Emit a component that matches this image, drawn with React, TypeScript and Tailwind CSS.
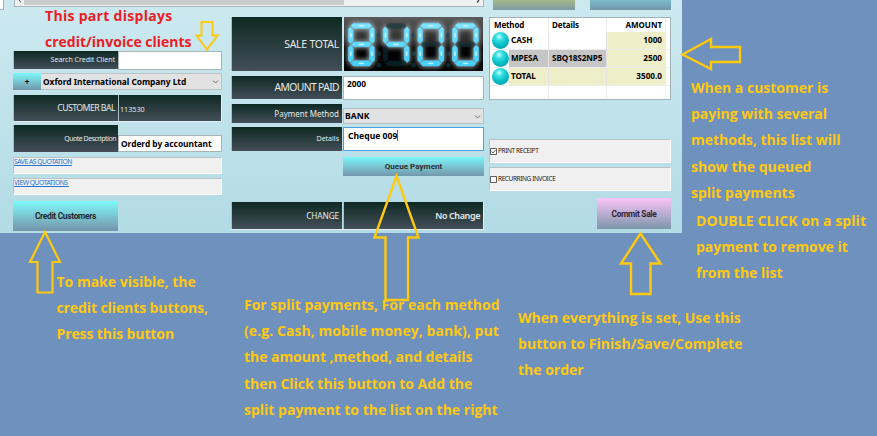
import React from 'react';

const ui = "font-['Noto_Sans','Open_Sans',sans-serif]";
const dark = 'bg-linear-to-b from-[#0d2923] to-[#444f5a] text-[#e4eaea]';

function T({ children, className = '' }: { children: React.ReactNode; className?: string }) {
  return <span className={`whitespace-pre ${className}`}>{children}</span>;
}

function Label({ children, className = '' }: { children: React.ReactNode; className?: string }) {
  return (
    <div className={`flex shrink-0 items-center justify-end border-l border-[#a9bcc0] ${dark} ${className}`}>{children}</div>
  );
}

function Chevron() {
  return (
    <svg className="mr-[2px] ml-auto h-[6px] w-[7px] shrink-0" viewBox="0 0 7 6" fill="none" stroke="#6b6b6b">
      <path d="M1 1.5 3.5 4 6 1.5" />
    </svg>
  );
}

const segments: Record<string, string> = {
  a: '5,0 21,0 23.5,2.5 20.5,5.2 5.5,5.2 2.5,2.5',
  b: '24,3.5 26,6 26,18 23.7,20.3 21.2,17.5 21.2,6.7',
  c: '23.7,22 26,24.3 26,37 24,39.2 21.2,36 21.2,24.8',
  d: '5.5,37.5 20.5,37.5 23.5,40 21,42.7 5,42.7 2.5,40',
  e: '2.3,22 4.8,24.8 4.8,36 2,39.2 0,37 0,24.3',
  f: '2,3.5 4.8,6.7 4.8,17.5 2.3,20.3 0,18 0,6',
  g: '5.5,18.7 20.5,18.7 23,21.2 20.5,23.6 5.5,23.6 3,21.2',
};
const lit: Record<string, string> = { '8': 'abcdefg', '4': 'bcfg', '0': 'abcdef' };
const glints: Record<string, [number, number, number, number]> = {
  a: [13, 2.6, 3, 0.9],
  b: [23.6, 12, 0.9, 2.6],
  c: [23.6, 30.5, 0.9, 2.6],
  d: [13, 40.1, 3, 0.9],
  e: [2.4, 30.5, 0.9, 2.6],
  f: [2.4, 12, 0.9, 2.6],
  g: [13, 21.2, 3, 0.9],
};

function Display() {
  return (
    <svg className="block h-[54px] w-[139px] shrink-0" viewBox="0 0 139 54">
      <defs>
        <linearGradient id="lcd" x1="0" y1="0" x2="0" y2="1">
          <stop offset="0" stopColor="#5a5a5a" />
          <stop offset="0.5" stopColor="#242424" />
          <stop offset="0.58" stopColor="#020202" />
          <stop offset="1" stopColor="#060606" />
        </linearGradient>
        <linearGradient id="seg" gradientUnits="userSpaceOnUse" x1="0" y1="0" x2="0" y2="43">
          <stop offset="0" stopColor="#7fe3ff" />
          <stop offset="1" stopColor="#3fcffa" />
        </linearGradient>
        <filter id="halo" x="-40%" y="-30%" width="180%" height="160%">
          <feGaussianBlur stdDeviation="2" />
        </filter>
      </defs>
      <rect width="139" height="54" fill="url(#lcd)" />
      {'8400'.split('').map((d, i) => (
        <g key={i} transform={`translate(${4.4 + i * 34.7} 6.2)`}>
          <g filter="url(#halo)" opacity="0.72">
            {lit[d].split('').map((s) => (
              <polygon key={s} points={segments[s]} fill="#b4bdc0" stroke="#b4bdc0" strokeWidth="3" />
            ))}
          </g>
          {Object.keys(segments).map((s) => (
            <polygon
              key={s}
              points={segments[s]}
              fill={lit[d].includes(s) ? 'url(#seg)' : '#0c333d'}
              stroke={lit[d].includes(s) ? '#58d6fb' : 'none'}
              strokeWidth="0.5"
              opacity={lit[d].includes(s) ? 1 : 0.55}
            />
          ))}
          {lit[d].split('').map((s) => {
            const [cx, cy, rx, ry] = glints[s];
            return <ellipse key={s} cx={cx} cy={cy} rx={rx} ry={ry} fill="#dcf8ff" opacity="0.8" />;
          })}
          {i < 3 && (
            <g fill="#123a44" opacity="0.7">
              <circle cx="30.4" cy="12" r="2.2" />
              <circle cx="30.4" cy="30.5" r="2.2" />
              <circle cx="30.4" cy="42" r="2.2" />
            </g>
          )}
        </g>
      ))}
    </svg>
  );
}

function Orb() {
  return (
    <span className="ml-[2px] size-[17px] shrink-0 rounded-full bg-[radial-gradient(circle_at_42%_28%,#c8ffff_0%,#3ce0e4_22%,#0cc3c9_50%,#05a3ab_80%,#4fc5ca_100%)]" />
  );
}

function Row({ name, details, amount, nameBg }: { name: string; details: string; amount: string; nameBg: string }) {
  return (
    <div className="flex h-[18px] items-center border-b border-[#ececec]">
      <Orb />
      <div className={`flex h-full w-[40px] items-center border-r border-[#e4e4e4] pl-[2px] ${nameBg}`}><T className="tracking-[-0.1px]">{name}</T></div>
      <div className={`flex h-full w-[58px] items-center border-r border-[#e4e4e4] pl-[3px] ${nameBg}`}><T className="tracking-[-0.1px]">{details}</T></div>
      <div className="flex h-full w-[58px] items-center justify-end bg-[#eeeec8] pr-[3px]"><T>{amount}</T></div>
      <div className="h-full w-px bg-[#ececec]" />
    </div>
  );
}

function Note({ lines, className }: { lines: [string, string][]; className: string }) {
  return (
    <div className={`absolute font-['Open_Sans','Noto_Sans',sans-serif] text-[14px] leading-[26.2px] font-bold ${className}`}>
      {lines.map(([text, tracking]) => (
        <div key={text} className={`w-max whitespace-pre ${tracking}`}>{text}</div>
      ))}
    </div>
  );
}

export default function App() {
  return (
    <div className={`relative h-[436px] w-[877px] overflow-hidden bg-[#6f91be] text-black ${ui}`}>
      <div className="h-[233px] w-[682px] bg-linear-to-b from-[#cde9f0] to-[#b2dbe5]">
        <div className="flex h-[17px] items-start">
          <div className="h-[10px] w-[4px] border-r border-b border-[#9fb3b8] bg-white" />
          <div className="ml-[10px] flex h-[7px] w-[470px] items-start border-r border-b border-l border-[#a6b5b9] bg-[#f0f0f0]">
            <svg className="h-[5px] w-[9px]" viewBox="0 0 9 5" fill="none" stroke="#555"><path d="M4 0 6 2.5" /></svg>
            <div className="h-[5px] w-[320px] bg-[#cdcdcd]" />
            <svg className="mr-[2px] ml-auto h-[5px] w-[6px]" viewBox="0 0 6 5" fill="none" stroke="#444" strokeWidth="1.3"><path d="M4 0 2 2.5" /></svg>
          </div>
          <div className="ml-[9px] h-[10px] w-[82px] bg-linear-to-b from-[#a4b78a] to-[#7f9aa4]" />
          <div className="ml-[15px] h-[10px] w-[81px] bg-linear-to-b from-[#7cbccb] to-[#7297ab]" />
        </div>

        <div className="flex">
          <div className="ml-[13px] w-[209px] pt-[34px]">
            <div className="flex h-[18px]">
              <Label className="w-[105px] pt-px pr-[3px] text-[7px]"><T>Search Credit Client</T></Label>
              <div className="h-[19px] flex-1 border border-[#a7b5b8] bg-white" />
            </div>
            <div className="mt-[4px] flex h-[17px]">
              <div className="flex w-[28px] items-center justify-center bg-linear-to-b from-[#7bf9fa] to-[#6f97ac] text-[8px] font-bold">+</div>
              <div className="flex flex-1 items-center border border-l-0 border-[#bac3c5] bg-[#e2e2e2] pt-px pl-[2px] text-[8.4px] font-bold"><T className="tracking-[-0.03px]">Oxford International Company Ltd</T><Chevron /></div>
            </div>
            <div className="mt-[5px] flex h-[27px] border-r border-b border-[#e1edf0]">
              <Label className="w-[105px] pt-px pr-[3px] text-[8.8px]"><T className="tracking-[-0.6px]">CUSTOMER BAL</T></Label>
              <div className={`flex flex-1 items-center border-l border-[#a9bcc0] pt-[2px] pl-[1px] text-[7.2px] ${dark}`}><T>113530</T></div>
            </div>
            <div className="mt-[3px] flex h-[27px] items-end">
              <Label className="h-[27px] w-[105px] pt-px pr-[2px] text-[7px]"><T className="tracking-[-0.48px]">Quote Description</T></Label>
              <div className="flex h-[17px] flex-1 items-center border border-[#a7b5b8] bg-white pt-px pl-[2px] text-[8.4px] font-bold"><T className="tracking-[-0.03px]">Orderd by accountant</T></div>
            </div>
            <div className="mt-[5px] h-[17px] border border-[#b9c3c6] border-r-white border-b-white bg-[#f0f0f0] text-[6.8px] leading-[8px] tracking-[-0.5px] text-[#2574cf] underline"><T>SAVE AS QUOTATION</T></div>
            <div className="mt-[4px] h-[17px] border border-[#b9c3c6] border-r-white border-b-white bg-[#f0f0f0] text-[6.8px] leading-[8px] tracking-[-0.5px] text-[#2574cf] underline"><T>{'VIEW QUOTATIONS '}</T></div>
            <div className="mt-[6px] flex h-[30px] w-[105px] items-center justify-center bg-linear-to-b from-[#79fafb] to-[#7494aa] font-[Roboto,sans-serif] text-[8.4px] font-bold tracking-[-0.3px] text-[#20282b]"><T>Credit Customers</T></div>
          </div>

          <div className="ml-[9px] w-[253px]">
            <div className="flex h-[54px]">
              <Label className="mr-[2px] w-[111px] pt-px pr-[3px] text-[10.5px]"><T className="tracking-[-0.25px]">SALE TOTAL</T></Label>
              <Display />
            </div>
            <div className="mt-[5px] flex h-[23px]">
              <Label className="w-[111px] pt-px pr-[3px] text-[10.3px]"><T className="tracking-[-0.6px]">AMOUNT PAID</T></Label>
              <div className="ml-px h-[24px] flex-1 border border-[#a7b5b8] bg-white pl-[3px] text-[8.4px] leading-[14px] font-bold"><T>2000</T></div>
            </div>
            <div className="mt-[5px] flex h-[19px]">
              <Label className="w-[111px] pr-[3px] text-[8px]"><T>Payment Method</T></Label>
              <div className="mt-[4px] ml-px flex h-[16px] flex-1 items-center border border-[#b7c0c2] bg-[#e2e2e2] pt-px pl-px text-[8.6px] font-bold"><T>BANK</T><Chevron /></div>
            </div>
            <div className="mt-[4px] flex h-[24px]">
              <Label className="w-[111px] pt-px pr-[3px] text-[7px]"><T>Details</T></Label>
              <div className="ml-px flex flex-1 items-start border border-[#4ba0df] bg-white pt-[2px] pl-[4px] text-[8.6px] leading-[12px] font-bold"><T>Cheque 009</T><span className="h-[11px] w-px bg-[#666]" /></div>
            </div>
            <div className="mt-[6px] ml-[112px] flex h-[19px] items-center justify-center bg-linear-to-b from-[#79f6f8] to-[#7297ad] font-[Roboto,sans-serif] text-[8.1px] font-bold text-[#2b302e]"><T>Queue Payment</T></div>
            <div className="mt-[26px] flex h-[28px] border-r border-b border-[#e1edf0]">
              <Label className="w-[111px] pt-px pr-[3px] text-[8.3px]"><T className="tracking-[-0.15px]">CHANGE</T></Label>
              <div className={`ml-px flex flex-1 items-center justify-end border-l border-[#a9bcc0] pr-[3px] text-[9px] font-semibold ${dark}`}><T className="tracking-[-0.4px]">No Change</T></div>
            </div>
          </div>

          <div className="ml-[5px] w-[182px]">
            <div className="h-[83px] border border-[#9fb3b8] bg-white text-[8.2px] font-bold">
              <div className="flex h-[14px] items-center text-[8px] leading-[14px]">
                <div className="w-[59px] border-r border-[#ececec] pl-[4px]"><T className="tracking-[-0.15px]">Method</T></div>
                <div className="w-[58px] border-r border-[#ececec] pl-[3px]"><T className="tracking-[-0.1px]">Details</T></div>
                <div className="flex w-[58px] justify-end pr-[3px]"><T>AMOUNT</T></div>
                <div className="h-full w-px bg-[#ececec]" />
              </div>
              <Row name="CASH" details="" amount="1000" nameBg="bg-white" />
              <Row name="MPESA" details="SBQ18S2NP5" amount="2500" nameBg="bg-[#c6c6c6]" />
              <Row name="TOTAL" details="" amount="3500.0" nameBg="bg-[#eeeec8]" />
              <div className="flex h-[13px]">
                <div className="w-[59px] border-r border-[#ececec]" />
                <div className="w-[58px] border-r border-[#ececec]" />
                <div className="w-[59px] border-r border-[#ececec]" />
              </div>
            </div>
            <div className="mt-[39px] flex h-[24px] items-center border border-[#b9c3c6] border-r-white border-b-white bg-[#f0f0f0] text-[6.5px] tracking-[-0.4px] text-[#222]">
              <svg className="mr-px size-[7px]" viewBox="0 0 7 7" fill="white" stroke="#333" strokeWidth="0.8"><path d="M.5.5h6v6h-6zM1.7 3.5 3 5 5.500 2" /></svg>
              <T>PRINT RECEIPT</T>
            </div>
            <div className="mt-[4px] flex h-[24px] items-center border border-[#b9c3c6] border-r-white border-b-white bg-[#f0f0f0] text-[6.5px] tracking-[-0.4px] text-[#222]">
              <svg className="mr-px size-[7px]" viewBox="0 0 7 7" fill="white" stroke="#333" strokeWidth="0.8"><path d="M.5.5h6v6h-6z" /></svg>
              <T>RECURRING INVOICE</T>
            </div>
            <div className="mt-[7px] ml-auto flex h-[31px] w-[74px] items-center justify-center bg-linear-to-b from-[#fbc4fb] to-[#7b96aa] pt-px font-[Roboto,sans-serif] text-[8.4px] font-bold tracking-[-0.3px] text-[#331f38]"><T>Commit Sale</T></div>
          </div>
        </div>
      </div>

      <svg className="absolute inset-0 h-[436px] w-[877px]" viewBox="0 0 877 436" fill="none" stroke="#ffc90e" strokeWidth="2.4">
        <path d="M201.500 22h11v13.500h5L207 49.500 196.500 35.500h5z" strokeWidth="2" />
        <path d="M45 232 60 262h-7.500v30.500h-15V262H30z" strokeWidth="2.2" />
        <path d="M396.500 176 418.500 237.500H408v62.500h-22.500v-62.500H374.500z" />
        <path d="M640.500 233.500 660.500 263.500h-10V294h-19.500v-30.500h-10z" />
        <path d="M682.500 54.500 711 39v8h29v15h-29v7z" />
      </svg>

      <Note className="top-[3px] left-[45px] text-[#ed1c24]" lines={[['This part displays', 'tracking-[0.3px]'], ['credit/invoice clients', '']]} />
      <Note className="top-[269px] left-[56.500px] text-[#ffc90e]" lines={[['To make visible, the', ''], ['credit clients buttons,', 'tracking-[-0.1px]'], ['Press this button', 'tracking-[-0.1px]']]} />
      <Note className="top-[292px] left-[244px] text-[#ffc90e]" lines={[['For split payments, For each method', ''], ['(e.g. Cash, mobile money, bank), put', 'tracking-[0.06px]'], ['the amount ,method, and details', 'tracking-[-0.05px]'], ['then Click this button to Add the', ''], ['split payment to the list on the right', '']]} />
      <Note className="top-[305px] left-[518px] text-[#ffc90e]" lines={[['When everything is set, Use this', ''], ['button to Finish/Save/Complete', 'tracking-[0.06px]'], ['the order', '']]} />
      <Note className="top-[75px] left-[691px] text-[#ffc90e]" lines={[['When a customer is', ''], ['paying with several', ''], ['methods, this list will', ''], ['show the queued', ''], ['split payments', '']]} />
      <Note className="top-[208px] left-[696px] text-[#ffc90e]" lines={[['DOUBLE CLICK on a split', 'tracking-[0.08px]'], ['payment to remove it', ''], ['from the list', '']]} />
    </div>
  );
}
